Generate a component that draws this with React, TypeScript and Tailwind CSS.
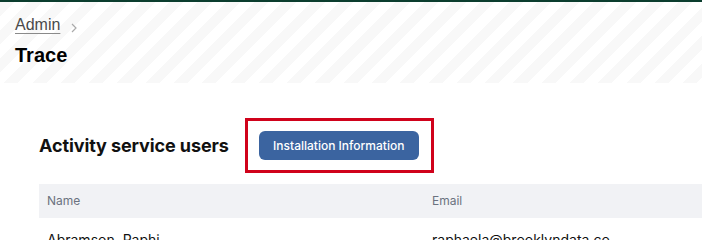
export default function App() {
  const users = [{ name: 'Abramson, Raphi', email: 'raphaela@brooklyndata.co' }]

  return (
    <div className="w-[702px] h-[240px] overflow-hidden bg-white">
      <div className="h-[2px] bg-[#0b3d2e]" />
      <div className="h-[81px] px-[15px] pt-[13px] bg-[repeating-linear-gradient(135deg,#f8f8f8_0px,#f8f8f8_10px,#ffffff_10px,#ffffff_20px)] font-['Liberation_Sans',Arial,sans-serif]">
        <div className="flex items-center gap-[10px] h-[20px]">
          <a className="text-[16px] text-[#4a4a4a] underline underline-offset-[3px] decoration-[#8a8a8a]">Admin</a>
          <svg width="8" height="10" viewBox="0 0 8 10" className="mt-[5px]">
            <path d="M2 1l4 4-4 4" fill="none" stroke="#aaaaaa" strokeWidth="1.2" />
          </svg>
        </div>
        <h1 className="mt-[8px] text-[20px] font-bold text-black leading-[24px]">Trace</h1>
      </div>

      <div className="px-[39px] pt-[35px] font-['Inter',sans-serif]">
        <div className="flex items-center gap-[16px]">
          <h2 className="text-[18px] font-bold text-[#111111] tracking-[-0.1px]">Activity service users</h2>
          <div className="border-[3px] border-[#d0021b] pl-[11px] pr-[12px] py-[10px]">
            <button className="h-[29px] w-[160px] rounded-[6px] bg-[#3b64a0] text-[12px] font-medium text-white">
              Installation Information
            </button>
          </div>
        </div>

        <table className="mt-[11px] w-[700px] border-collapse text-left">
          <thead>
            <tr className="bg-[#f1f2f5] h-[34px]">
              <th className="w-[385px] px-2 text-[12px] font-normal text-[#6b7280]">Name</th>
              <th className="px-2 text-[12px] font-normal text-[#6b7280]">Email</th>
            </tr>
          </thead>
          <tbody>
            {users.map((u) => (
              <tr key={u.email}>
                <td className="px-2 py-[11px] text-[14px] text-[#111111]">{u.name}</td>
                <td className="px-2 py-[11px] text-[14px] text-[#111111]">{u.email}</td>
              </tr>
            ))}
          </tbody>
        </table>
      </div>
    </div>
  )
}
